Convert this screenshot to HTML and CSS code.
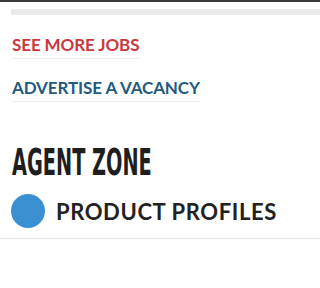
FILE: index.html
```
<!DOCTYPE html>
<html>
<head>
<meta charset="utf-8">
<link rel="stylesheet" href="styles.css">
</head>
<body>
<div class="topline"></div>
<div class="page">
  <div class="graybar"></div>
  <ul class="links">
    <li><a class="link red" href="#">SEE MORE JOBS</a></li>
    <li><a class="link blue" href="#">ADVERTISE A VACANCY</a></li>
  </ul>
  <h2 class="zone"><span class="zone-text">AGENT ZONE</span></h2>
  <div class="profile">
    <span class="dot"></span>
    <span class="profile-text">PRODUCT PROFILES</span>
  </div>
</div>
</body>
</html>
```
FILE: styles.css
```
html, body { margin: 0; padding: 0; background: #fff; }
body { height: 288px; overflow: hidden; font-family: Lato, "Liberation Sans", sans-serif; }
.topline { height: 2px; background: #3a3a3a; }
.page { padding-left: 11px; }
.graybar { height: 6px; margin-top: 7px; background: #ebebeb; }
.links { list-style: none; margin: 0; padding: 0; }
.links li { margin-top: 20px; }
.links li + li { margin-top: 19px; }
.link { display: inline-block; text-decoration: none; font-weight: 700; font-size: 17px; line-height: 18px; padding: 0 1px 4px 1px; border-bottom: 1px solid #eeeeee; letter-spacing: -0.1px; }
.red { color: #c8383c; }
.blue { color: #235a80; }
.zone { margin: 42px 0 0 1px; font-family: "DejaVu Sans Condensed", "DejaVu Sans", sans-serif; font-stretch: condensed; font-weight: 700; font-size: 37px; line-height: 37px; color: #1e1e1e; }
.zone-text { display: inline-block; transform: scaleX(0.58); transform-origin: left center; }
.profile { display: flex; align-items: center; gap: 11px; margin-top: 13px; padding-bottom: 10px; border-bottom: 1px solid #e4e4e4; margin-left: -11px; padding-left: 11px; }
.dot { width: 34px; height: 34px; border-radius: 50%; background: #3a8fd0; flex: none; }
.profile-text { font-weight: 700; font-size: 22px; letter-spacing: 0.6px; color: #222; }
```
